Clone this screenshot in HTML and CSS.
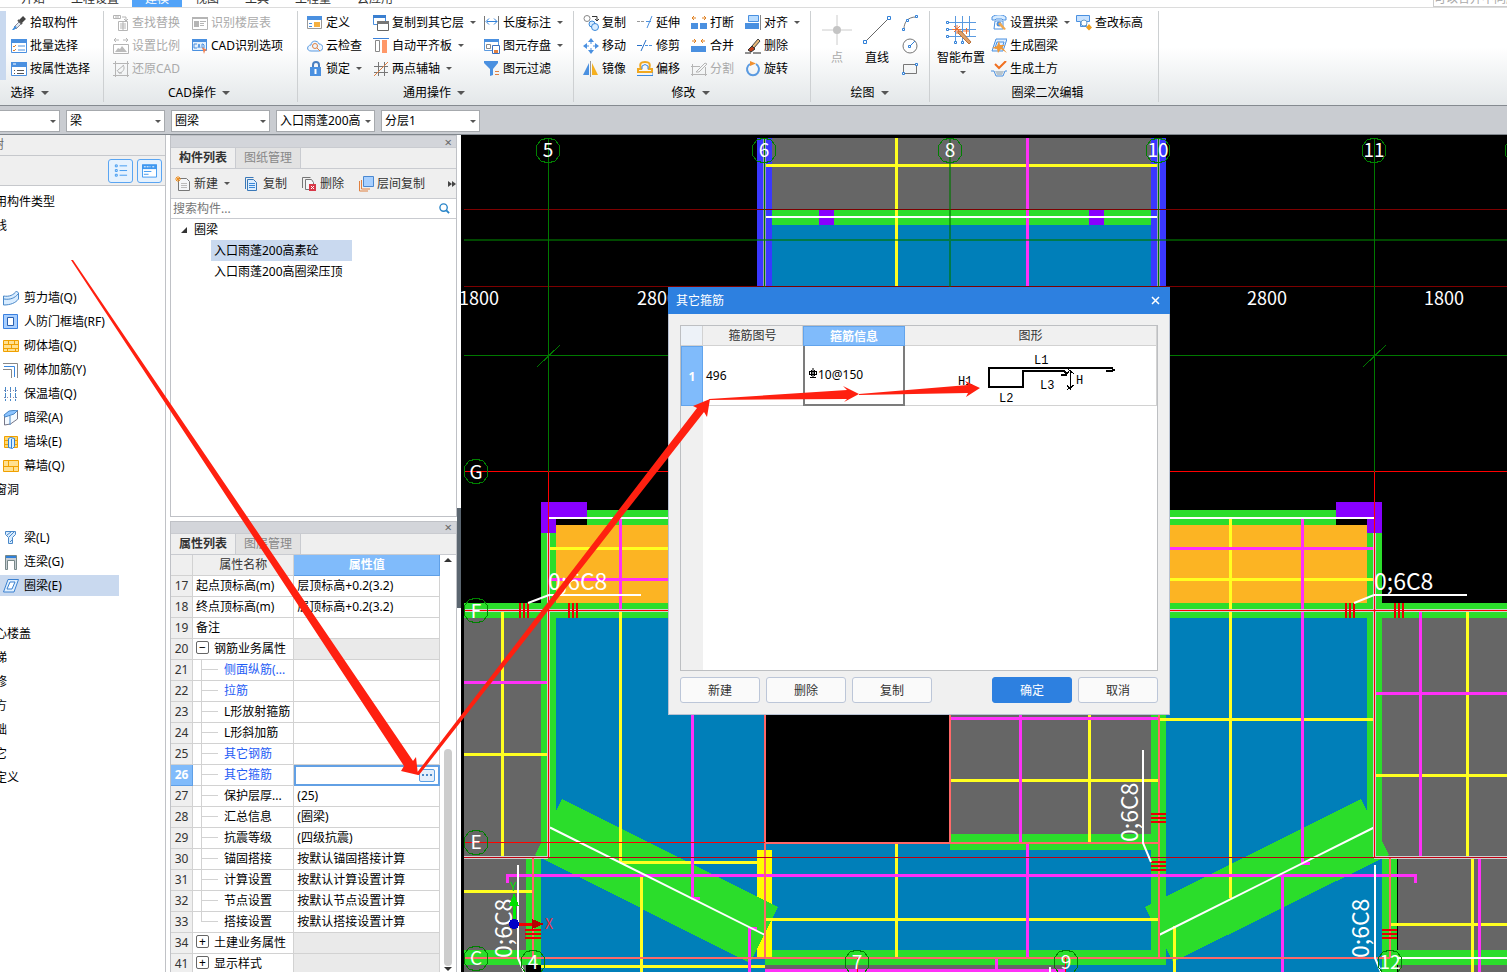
FILE: index.html
```html
<!DOCTYPE html>
<html lang="zh-CN">
<head>
<meta charset="utf-8">
<title>其它箍筋</title>
<link rel="stylesheet" href="styles.css">
</head>
<body>
<div class="app">
  <nav class="tabs">
    <a href="#" class="tab">开始</a><a href="#" class="tab">工程设置</a><a href="#" class="tab tab-on">建模</a><a href="#" class="tab">视图</a><a href="#" class="tab">工具</a><a href="#" class="tab">工程量</a><a href="#" class="tab">云应用</a>
    <span class="tip">可以合并不同版</span>
  </nav>

  <header class="ribbon">
    <section class="group g-select">
      <div class="tools">
        <button class="big-edge" aria-label="选择"></button>
        <div class="col">
          <button class="tool"><svg class="ico" viewBox="0 0 16 16"><path d="M3 12l6-6 2 2-6 6z" fill="#dfe9f2" stroke="#889"/><path d="M7 5l4 4" stroke="#555" stroke-width="2"/><path d="M9.500 6.500l4-4" stroke="#444" stroke-width="4"/><path d="M1 15l3-4 2 1-3 3z" fill="#3b8de0"/></svg>拾取构件</button>
          <button class="tool"><svg class="ico" viewBox="0 0 16 16"><path d="M.5 1.500h15v13H.5z" fill="#fff" stroke="#4a90e0"/><path d="M0 1h16v4H0z" fill="#4a90e0"/><path d="M7 8h7M7 12h7" stroke="#4a90e0"/><path d="M2 8l1 1 2-2M2 12l1 1 2-2" stroke="#e08030" fill="none"/></svg>批量选择</button>
          <button class="tool"><svg class="ico" viewBox="0 0 16 16"><path d="M.5 1.500h15v13H.5z" fill="#fff" stroke="#4a90e0"/><path d="M0 1h16v5H0z" fill="#4a90e0"/><path d="M2 3h3" stroke="#fff"/><path d="M6 9.500h7M6 12.500h7M3 9.500h1M3 12.500h1" stroke="#555"/></svg>按属性选择</button>
        </div>
      </div>
      <button class="group-name">选择<i class="caret big"></i></button>
    </section>

    <section class="group g-cad">
      <div class="tools">
        <div class="col">
          <button class="tool" disabled><svg class="ico" viewBox="0 0 16 16" fill="none" stroke="#b5b5b5"><path d="M.5.5h7v3h-7zM3 .5v3M5 .5v3M9 2h4v4M11 4l2 2 2-2M5.500 6.500h9v9h-9zM7 9h6M7 11h6M7 13h6M10 7v8"/></svg>查找替换</button>
          <button class="tool" disabled><svg class="ico" viewBox="0 0 16 16"><path d="M1 2h5M10 2h5M3 0L1 2l2 2M13 0l2 2-2 2M.5 6.500h15v9H.5z" fill="none" stroke="#b5b5b5"/><path d="M2 14l3-4 2 1 2-3 5 6z" fill="#bbb"/></svg>设置比例</button>
          <button class="tool" disabled><svg class="ico" viewBox="0 0 16 16" fill="none" stroke="#b5b5b5"><path d="M2.500 0v16M14.500 0v16M0 2.500h16M0 14.500h16M10 4c3 4-1 8-4 8M4 9l2 3 3 0M11 4L5 9"/></svg>还原CAD</button>
        </div>
        <div class="col">
          <button class="tool" disabled><svg class="ico" viewBox="0 0 16 16"><path d="M.5 2.500h15v12H.5z" fill="none" stroke="#b5b5b5"/><path d="M0 2h16v2H0zM2 6h5v6H2z" fill="#b5b5b5"/><path d="M8 6.500h6M8 8.500h4M8 10.500h4" stroke="#b5b5b5"/></svg>识别楼层表</button>
          <button class="tool"><svg class="ico" viewBox="0 0 16 16"><path d="M.5 1.500h14v11H.5z" fill="#e4f0fc" stroke="#4a90e0"/><path d="M0 1h15v3H0z" fill="#4a90e0"/><path d="M5 6H2v4h3M6 10l1-4 1 4M10 6v4h2V7l-1-1z" stroke="#4a90e0" fill="none"/><path d="M10 9l5 3-2 1-1 3z" fill="#f08050"/></svg>CAD识别选项</button>
        </div>
      </div>
      <button class="group-name">CAD操作<i class="caret big"></i></button>
    </section>

    <section class="group g-common">
      <div class="tools">
        <div class="col">
          <button class="tool"><svg class="ico" viewBox="0 0 16 16"><path d="M.5 1.500h14v12H.5z" fill="#fff" stroke="#999"/><path d="M0 1h15v4H0z" fill="#4a90e0"/><path d="M2 8.500h3M2 11.500h3" stroke="#4a90e0"/><path d="M7 7h6v5H7z" fill="#f5b040"/></svg>定义</button>
          <button class="tool"><svg class="ico" viewBox="0 0 16 16" fill="none"><path d="M4 13C-1 13 0 7 4 7c0-5 7-5 8-1 5 0 5 7 0 7z" fill="#eef6ff" stroke="#5a9ae0"/><circle cx="8" cy="8" r="2.500" stroke="#e08040"/><path d="M10 10l3 3" stroke="#e08040"/></svg>云检查</button>
          <button class="tool"><svg class="ico" viewBox="0 0 16 16"><path d="M6 7V4c0-4 6-4 6 0v3" fill="none" stroke="#4a7fc0" stroke-width="2"/><path d="M3 6h11v9H3z" fill="#4a90e0"/><path d="M8.500 8v5" stroke="#fff" stroke-width="2"/></svg>锁定<i class="caret"></i></button>
        </div>
        <div class="col">
          <button class="tool"><svg class="ico" viewBox="0 0 16 16"><path d="M.5.5h12v9H.5z" fill="#fff" stroke="#4a90e0"/><path d="M0 0h13v3H0z" fill="#3a7fd0"/><path d="M4.500 6.500h11v9h-11z" fill="#fff" stroke="#666"/><path d="M4 6h12v3H4z" fill="#777"/></svg>复制到其它层<i class="caret"></i></button>
          <button class="tool"><svg class="ico" viewBox="0 0 16 16"><path d="M0 .5h16" stroke="#3a80d8"/><path d="M2.500 2.500h4v11h-4z" fill="#fff" stroke="#888"/><path d="M9 2h5v13H9z" fill="#ff9868"/></svg>自动平齐板<i class="caret"></i></button>
          <button class="tool"><svg class="ico" viewBox="0 0 16 16" fill="none"><path d="M5.500 1v14M11.500 1v14M1 5.500h14M1 11.500h14" stroke="#777"/><path d="M1 15L15 1" stroke="#e08040"/></svg>两点辅轴<i class="caret"></i></button>
        </div>
        <div class="col">
          <button class="tool"><svg class="ico" viewBox="0 0 16 16" fill="none"><path d="M.5 1v14M14.500 1v14" stroke="#777"/><path d="M3 6.500h10M5 3.500l-3 3 3 3M10 3.500l3 3-3 3" stroke="#3080d8"/></svg>长度标注<i class="caret"></i></button>
          <button class="tool"><svg class="ico" viewBox="0 0 16 16"><path d="M.5 1.500h14v11H.5z" fill="#fff" stroke="#5a9ae0"/><path d="M0 1h15v3H0z" fill="#4a90e0"/><path d="M2.500 6.500h4v4h-4z" fill="none" stroke="#888"/><path d="M8.500 7.500h7v8h-7z" fill="#fff" stroke="#3a70c0"/><path d="M10 12h4v3h-4z" fill="#e08040"/></svg>图元存盘<i class="caret"></i></button>
          <button class="tool"><svg class="ico" viewBox="0 0 16 16"><path d="M0 0h14v2L9 8v6l-3 1V8L0 2z" fill="#4a90e0"/><path d="M11 10.500h4M11 13.500h4" stroke="#e08040"/></svg>图元过滤</button>
        </div>
      </div>
      <button class="group-name">通用操作<i class="caret big"></i></button>
    </section>

    <section class="group g-modify">
      <div class="tools">
        <div class="col">
          <button class="tool"><svg class="ico" viewBox="0 0 16 16" fill="none"><circle cx="4" cy="3.500" r="3" stroke="#888"/><path d="M9 1.500h5V6M12 4l2 2 2-2" stroke="#333"/><circle cx="9" cy="9" r="3" fill="#d8ecff" stroke="#3a88d8"/><circle cx="12" cy="12" r="3.500" fill="#d8ecff" stroke="#3a88d8"/></svg>复制</button>
          <button class="tool"><svg class="ico" viewBox="0 0 16 16"><path d="M8 0l3 4H5zM8 16l3-4H5zM0 8l4-3v6zM16 8l-4-3v6z" fill="#4a90e0"/><path d="M8 3v3M8 10v3M3 8h3M10 8h3" stroke="#4a90e0"/></svg>移动</button>
          <button class="tool"><svg class="ico" viewBox="0 0 16 16"><path d="M6 2v12H0z" fill="#4a90e0"/><path d="M7.500 0v16" stroke="#999"/><path d="M9 2v12h6z" fill="#f5b020"/></svg>镜像</button>
        </div>
        <div class="col">
          <button class="tool"><svg class="ico" viewBox="0 0 16 16" fill="none"><path d="M0 6.500h8" stroke="#999" stroke-dasharray="3 1"/><path d="M9 6.500h5M15 1l-5 12" stroke="#4a90e0"/></svg>延伸</button>
          <button class="tool"><svg class="ico" viewBox="0 0 16 16" fill="none"><path d="M0 7.500h5M9 2L4 13" stroke="#2870c8"/><path d="M8 7.500h8" stroke="#4a90e0" stroke-dasharray="3 1"/></svg>修剪</button>
          <button class="tool"><svg class="ico" viewBox="0 0 16 16" fill="none"><path d="M1 11V8h3C2 2 4 1 8 1s6 1 4 7h3v3z" stroke="#f0a820" stroke-width="2"/><path d="M0 14.500h16V11M5 8V5q3-3 6 0v3" stroke="#3a88e0"/></svg>偏移</button>
        </div>
        <div class="col">
          <button class="tool"><svg class="ico" viewBox="0 0 16 16"><path d="M0 8h7v6H0zM9 8h7v6H9z" fill="#4a90e0"/><path d="M1 3h4M11 3h4M3 1L1 3l2 2M13 1l2 2-2 2" fill="none" stroke="#e08020"/></svg>打断</button>
          <button class="tool"><svg class="ico" viewBox="0 0 16 16"><path d="M0 8h15v6H0z" fill="#4a90e0"/><path d="M1 3h4M10 3h4M3 1l2 2-2 2M12 1l-2 2 2 2" fill="none" stroke="#e08020"/></svg>合并</button>
          <button class="tool" disabled><svg class="ico" viewBox="0 0 16 16" fill="none" stroke="#b5b5b5"><path d="M1.500 3v12M0 5.500h9M0 13.500h16M14.500 6v9M5 11L14 2l2 1-8 8z"/></svg>分割</button>
        </div>
        <div class="col">
          <button class="tool"><svg class="ico" viewBox="0 0 16 16"><path d="M3.500.5h10v6h-10z" fill="#b8dcff" stroke="#4a90e0"/><path d="M0 8h14v6H0z" fill="#4a90e0"/><path d="M15.500 0v15" stroke="#888"/></svg>对齐<i class="caret"></i></button>
          <button class="tool"><svg class="ico" viewBox="0 0 16 16"><path d="M7 8l6-7 2 2-6 7z" fill="#e8b878" stroke="#444"/><path d="M3 12l4-4 3 3-4 3z" fill="#c04018" stroke="#333"/><path d="M0 15h6M8 15h8" stroke="#222"/></svg>删除</button>
          <button class="tool"><svg class="ico" viewBox="0 0 16 16" fill="none"><path d="M11 3a6 6 0 1 1-6 0" stroke="#5a9ae0" stroke-width="2"/><path d="M5 0l6 2.500L5 5z" fill="#f09030"/></svg>旋转</button>
        </div>
      </div>
      <button class="group-name">修改<i class="caret big"></i></button>
    </section>

    <section class="group g-draw">
      <div class="tools">
        <button class="big-tool" disabled><svg class="big-ico" viewBox="0 0 30 30"><path d="M15 0v30M0 15h30" stroke="#ccc"/><circle cx="15" cy="15" r="4" fill="#c4c4c4"/></svg>点</button>
        <button class="big-tool"><svg class="big-ico" viewBox="0 0 30 30" fill="#fff"><path d="M3 27L27 3" stroke="#666"/><path d="M1.500 25.500h3v3h-3zM25.500 1.500h3v3h-3z" stroke="#3080d8"/></svg>直线</button>
        <div class="col">
          <button class="tool" aria-label="弧"><svg class="ico" viewBox="0 0 16 16" fill="#fff"><path d="M2 14C2 7 6 2 14 2" fill="none" stroke="#777"/><path d="M.5 13.500h2v2h-2zM13.500.5h2v2h-2zM4.500 4.500h2v2h-2z" stroke="#3080d8"/></svg></button>
          <button class="tool" aria-label="圆"><svg class="ico" viewBox="0 0 16 16" fill="none"><circle cx="8" cy="8" r="7" stroke="#777"/><path d="M8 8l5-5M6.500 7.500h2v2h-2z" stroke="#3080d8"/></svg></button>
          <button class="tool" aria-label="矩形"><svg class="ico" viewBox="0 0 16 16" fill="#fff"><path d="M1.500 3.500h13v9h-13z" fill="none" stroke="#777"/><path d="M.5 11.500h2v2h-2zM13.500 2.500h2v2h-2z" stroke="#3080d8"/></svg></button>
        </div>
      </div>
      <button class="group-name">绘图<i class="caret big"></i></button>
    </section>

    <section class="group g-ring">
      <div class="tools">
        <button class="big-tool"><svg class="big-ico" viewBox="0 0 30 30" fill="none"><path d="M9.500 1v25M16.500 1v25M23.500 1v20M2 7.500h28M2 14.500h28M2 21.500h28" stroke="#5a9ae0"/><path d="M.5 6.500h2v2h-2zM.5 13.500h2v2h-2zM.5 20.500h2v2h-2zM8.500 26.500h2v2h-2zM15.500 26.500h2v2h-2z" fill="#fff" stroke="#3080d8"/><path d="M12 16l3 0 10 11-2 2-11-11z" fill="#e0a068" stroke="#b87038"/><path d="M11 10v9M6 14.500h9M8 11l6 6M14 11l-6 6M20.500 13v6M17 16h6" stroke="#f07030"/></svg>智能布置<i class="caret"></i></button>
        <div class="col">
          <button class="tool"><svg class="ico" viewBox="0 0 16 16"><path d="M1 5V2c4-3 10-3 14 0v3h-3l-1-1H5L4 5z" fill="#d8ecff" stroke="#4a90e0"/><path d="M4 6h8v8H3z" fill="#fff" stroke="#4a90e0"/><circle cx="8" cy="9" r="2.500" fill="#4a90e0"/><path d="M9 7l6 7-2 1-6-6z" fill="#f0a850"/></svg>设置拱梁<i class="caret"></i></button>
          <button class="tool"><svg class="ico" viewBox="0 0 16 16"><path d="M5 1h11l-4 12H1z" fill="#e0efff" stroke="#4a90e0"/><path d="M6 4h7l-2 6H4z" fill="none" stroke="#4a90e0"/><path d="M8 3l1 4 5 0-3 2 5 6-6-4-3 4-1-4-5-1 5-2z" fill="#f09838"/></svg>生成圈梁</button>
          <button class="tool"><svg class="ico" viewBox="0 0 16 16" fill="none"><path d="M4 3l4 4 7-7" stroke="#f07020" stroke-width="2"/><path d="M0 10h3l2 5h7l2-5h2" stroke="#4a90e0"/><path d="M4 10h9l-2 4H6z" fill="#b8c4cc"/></svg>生成土方</button>
        </div>
        <div class="col">
          <button class="tool"><svg class="ico" viewBox="0 0 16 16"><path d="M.5.5h13v6h-3v5h-6v-5h-4z" fill="#c8e2ff" stroke="#4a90e0"/><circle cx="8" cy="8" r="3" fill="#fff" stroke="#6a9cc8"/><path d="M13 9l3 3.500-3 3-3-3z" fill="#f0a020"/></svg>查改标高</button>
        </div>
      </div>
      <div class="group-name">圈梁二次编辑</div>
    </section>
  </header>

  <div class="picks">
    <label class="pick first"><select aria-label="楼层"><option></option></select></label>
    <label class="pick"><select aria-label="类别"><option>梁</option></select></label>
    <label class="pick"><select aria-label="构件类型"><option>圈梁</option></select></label>
    <label class="pick"><select aria-label="构件"><option>入口雨蓬200高素砼</option></select></label>
    <label class="pick"><select aria-label="分层"><option>分层1</option></select></label>
  </div>

  <main class="work">
    <aside class="nav">
      <div class="nav-title">导航树</div>
      <div class="nav-tools">
        <button class="view-btn" aria-label="列表"><svg viewBox="0 0 16 16" fill="none" stroke="#3d97f0"><path d="M2.500 1.500h2v2h-2zM2.500 6.500h2v2h-2zM2.500 11.500h2v2h-2zM7 2.500h8M7 7.500h8M7 12.500h8"/></svg></button>
        <button class="view-btn" aria-label="面板"><svg viewBox="0 0 16 16"><path d="M.5 1.500h15v13H.5z" fill="#fff" stroke="#3d97f0"/><path d="M0 1h16v5H0z" fill="#3d97f0"/><path d="M2 3.500h7M11 3.500h3" stroke="#fff" stroke-dasharray="2 1"/><path d="M2 8.500h8M2 11.500h5" stroke="#3d97f0"/></svg></button>
      </div>
      <ul class="tree">
        <li class="cat">常用构件类型</li>
        <li class="cat">轴线</li>
        <li></li>
        <li></li>
        <li><svg class="ico" viewBox="0 0 16 16"><path d="M.5 6c6 1 10-1 13-5l2 2v6c-3 4-8 6-15 6z" fill="#d8ecff" stroke="#4a88c8"/><path d="M1 9c6 1 11-1 14-5" fill="none" stroke="#4a88c8"/></svg>剪力墙(Q)</li>
        <li><svg class="ico" viewBox="0 0 16 16"><path d="M.5.5h14v14H.5z" fill="#a8cfff" stroke="#3a80e0"/><path d="M4.500 3.500h6v8h-6z" fill="#fff" stroke="#2a60b0"/></svg>人防门框墙(RF)</li>
        <li><svg class="ico" viewBox="0 0 16 16"><path d="M.5 2.500h15v11H.5zM0 6.500h16M0 10.500h16M5.500 2v4M11.500 2v4M8.500 6v4M4.500 10v4M12.500 10v4" fill="#ffe090" stroke="#f0a000"/></svg>砌体墙(Q)</li>
        <li><svg class="ico" viewBox="0 0 16 16" fill="none"><path d="M0 1.500h14.500V16M0 7.500h8.500V16" stroke="#888"/><path d="M1 4.500h10.500V15" stroke="#3a88e0"/></svg>砌体加筋(Y)</li>
        <li><svg class="ico" viewBox="0 0 16 16" fill="none"><path d="M2.500 1v14M7.500 1v14M12.500 1v14" stroke="#4a88c8" stroke-dasharray="5 1"/><path d="M1 4.500h14M1 11.500h14" stroke="#88a" stroke-dasharray="1 2"/></svg>保温墙(Q)</li>
        <li><svg class="ico" viewBox="0 0 16 16"><path d="M1.500 5.500l5-4 8-.5v8l-7 5-6 1z" fill="#f4faff" stroke="#778"/><path d="M1 5l5-4 9-1-4 4-9 3zM7 6v9" fill="#8cc4ff" stroke="#4a88c8"/></svg>暗梁(A)</li>
        <li><svg class="ico" viewBox="0 0 16 16"><path d="M1.500 2.500h13v11h-13zM1 6.500h14M1 10.500h14" fill="#ffd870" stroke="#f0a000"/><path d="M5.500 4.500l2-1 4 1v8l-2 2-4-1zM8.500 5v9" fill="#d8f0ff" stroke="#3080d8"/></svg>墙垛(E)</li>
        <li><svg class="ico" viewBox="0 0 16 16"><path d="M.5 2.500h15v11H.5zM0 8.500h16M5.500 2v6M10.500 8v6" fill="#ffe090" stroke="#f0a000"/></svg>幕墙(Q)</li>
        <li class="cat">门窗洞</li>
        <li></li>
        <li><svg class="ico" viewBox="0 0 16 16"><path d="M2.500 1.500h10v3l-3 3v6h-4v-6l-3-3z" fill="#d8ecff" stroke="#4a88c8"/><path d="M4 5l4-3M6 7l5-5M7 12l3-3" stroke="#4a88c8"/></svg>梁(L)</li>
        <li><svg class="ico" viewBox="0 0 16 16"><path d="M2.500 1.500h11v14h-2v-9h-7v9h-2z" fill="#c8cdd4" stroke="#788"/><path d="M3 3h10" stroke="#3080d8" stroke-width="2"/></svg>连梁(G)</li>
        <li class="picked"><svg class="ico" viewBox="0 0 16 16" fill="none" stroke="#3a80d0"><path d="M5 1.500h10.500L11 14H.5z" fill="#e0f0ff"/><path d="M7 4h5l-3 7H4z" fill="#fff"/></svg>圈梁(E)</li>
        <li></li>
        <li class="cat">空心楼盖</li>
        <li class="cat">楼梯</li>
        <li class="cat">装修</li>
        <li class="cat">土方</li>
        <li class="cat">基础</li>
        <li class="cat">其它</li>
        <li class="cat">自定义</li>
      </ul>
    </aside>

    <div class="docks">
      <section class="dock dock-list">
        <div class="dock-bar"><button aria-label="关闭">×</button></div>
        <div class="dock-tabs"><button class="dock-tab on">构件列表</button><button class="dock-tab">图纸管理</button></div>
        <div class="dock-tools">
          <button class="tool"><svg class="ico" viewBox="0 0 16 16"><path d="M3.500 2.500h8l3 3v9h-11z" fill="#f4f6f8" stroke="#777"/><path d="M6 7.500h6M6 9.500h6M6 11.500h6" stroke="#bbb"/><path d="M3 0v6M0 3h6M1 1l4 4M5 1L1 5" stroke="#f09020"/></svg>新建<i class="caret"></i></button>
          <button class="tool"><svg class="ico" viewBox="0 0 16 16"><path d="M1.500 13V1.500h8" fill="none" stroke="#3a78b8"/><path d="M3.500 3.500h6l3 3v8h-9z" fill="#dceeff" stroke="#3a78b8"/><path d="M5 7.500h6M5 9.500h6M5 11.500h6" stroke="#3a88d8"/></svg>复制</button>
          <button class="tool"><svg class="ico" viewBox="0 0 16 16"><path d="M1.500 12V1.500h8" fill="none" stroke="#777"/><path d="M4.500 3.500h6l2 3v7h-8z" fill="#f4f6f8" stroke="#777"/><path d="M8 8h7v7H8z" fill="#d83848"/><path d="M10 10l3 3M13 10l-3 3" stroke="#fff"/></svg>删除</button>
          <button class="tool"><svg class="ico" viewBox="0 0 16 16"><path d="M1.500 5v10H10M3.500 4v9H12" fill="none" stroke="#e08040"/><path d="M5.500.5h10v10h-10z" fill="#a8d0ff" stroke="#4a88d0"/></svg>层间复制</button>
          <button class="more" aria-label="更多"><i></i><i></i></button>
        </div>
        <label class="search"><input type="text" placeholder="搜索构件..." aria-label="搜索构件"><svg class="search-ico" viewBox="0 0 12 12" fill="none" stroke="#2884c8"><circle cx="5" cy="5" r="4" stroke-width="1.500"/><path d="M8 8l3 3" stroke-width="2"/></svg></label>
        <ul class="parts">
          <li class="parent">圈梁</li>
          <li><span class="part picked">入口雨蓬200高素砼</span></li>
          <li><span class="part">入口雨蓬200高圈梁压顶</span></li>
        </ul>
      </section>

      <section class="dock dock-props">
        <div class="dock-bar"><button aria-label="关闭">×</button></div>
        <div class="dock-tabs"><button class="dock-tab on">属性列表</button><button class="dock-tab">图层管理</button></div>
        <div class="props-wrap">
          <table class="props">
            <colgroup><col class="c-no"><col class="c-name"><col></colgroup>
            <thead><tr><th></th><th>属性名称</th><th class="hot">属性值</th></tr></thead>
            <tbody>
              <tr><th>17</th><td>起点顶标高(m)</td><td>层顶标高+0.2(3.2)</td></tr>
              <tr><th>18</th><td>终点顶标高(m)</td><td>层顶标高+0.2(3.2)</td></tr>
              <tr><th>19</th><td>备注</td><td></td></tr>
              <tr class="head"><th>20</th><td><button class="fold">−</button>钢筋业务属性</td><td></td></tr>
              <tr class="link"><th>21</th><td><i class="branch"></i>侧面纵筋(...</td><td></td></tr>
              <tr class="link"><th>22</th><td><i class="branch"></i>拉筋</td><td></td></tr>
              <tr><th>23</th><td><i class="branch"></i>L形放射箍筋</td><td></td></tr>
              <tr><th>24</th><td><i class="branch"></i>L形斜加筋</td><td></td></tr>
              <tr class="link"><th>25</th><td><i class="branch"></i>其它钢筋</td><td></td></tr>
              <tr class="link current"><th>26</th><td><i class="branch"></i>其它箍筋</td><td><button class="dots" aria-label="编辑其它箍筋"><i></i><i></i><i></i></button></td></tr>
              <tr><th>27</th><td><i class="branch"></i>保护层厚...</td><td>(25)</td></tr>
              <tr><th>28</th><td><i class="branch"></i>汇总信息</td><td>(圈梁)</td></tr>
              <tr><th>29</th><td><i class="branch"></i>抗震等级</td><td>(四级抗震)</td></tr>
              <tr><th>30</th><td><i class="branch"></i>锚固搭接</td><td>按默认锚固搭接计算</td></tr>
              <tr><th>31</th><td><i class="branch"></i>计算设置</td><td>按默认计算设置计算</td></tr>
              <tr><th>32</th><td><i class="branch"></i>节点设置</td><td>按默认节点设置计算</td></tr>
              <tr><th>33</th><td><i class="branch end"></i>搭接设置</td><td>按默认搭接设置计算</td></tr>
              <tr class="head"><th>34</th><td><button class="fold">+</button>土建业务属性</td><td></td></tr>
              <tr class="head"><th>41</th><td><button class="fold">+</button>显示样式</td><td></td></tr>
            </tbody>
          </table>
          <div class="scroll"><i class="up"></i><span></span><i class="thumb"></i><i class="down"></i></div>
        </div>
      </section>
    </div>

    <div class="splitter"><span></span></div>

    <div class="canvas">
      <svg class="plan">
        <g transform="translate(-461 -135)">
          <!-- upper block -->
          <path fill="#666" d="M765 138h393v71H765z"/>
          <path fill="#007fb9" d="M765 225h393v120H765z"/>
          <path fill="#2bdd2b" d="M765 209h393v16H765z"/>
          <path fill="#8800ff" d="M819 209h15v16h-15zM1089 209h15v16h-15z"/>
          <path fill="#3a38ff" d="M757 138h15v180h-15zM1151 138h15v180h-15z"/>
          <path stroke="#ffff20" stroke-width="3" d="M765 165.500h393M896 138v180"/>
          <path stroke="#ff30f8" stroke-width="3" d="M1027 138v180"/>
          <path stroke="#fff" stroke-width="2" d="M765 217h393"/>
          <path stroke="#9a9ab8" stroke-width="3" d="M764.500 138v180M1158.500 138v180"/>

          <!-- slabs -->
          <path fill="#666" d="M464 611h77v246h-77zM464 858h62v92h-62zM950 700h201v134H950zM1382 618h125v239h-125zM1398 858h109v114h-109zM765 965h300v7H765zM464 965h62v7h-62z"/>
          <path fill="#007fb9" d="M556 618h209v354H541V858h15zM765 843h386v107H765zM1166 618h201v240h15v114h-317v-7h101z"/>
          <path fill="#fcb423" d="M556 525h811v78H556z"/>

          <!-- beams -->
          <path fill="#2bdd2b" d="M587 510h749v15H587zM464 603h1043v15H464zM541 533h15v325h-15zM1367 533h15v325h-15zM526 858h15v107h-15zM464 950h77v15h-77zM765 950h401v15H765zM950 834h201v16H950zM1151 618h15v340h-15zM1382 858h15v114h-15zM1397 950h110v15h-110z"/>
          <path fill="#8800ff" d="M541 502h46v15h-31v16h-15zM1382 502h-46v15h31v16h15z"/>
          <path fill="#ffff00" d="M757 850h15v108h-15z"/>
          <path fill="#2bdd2b" d="M562 799l216 108-28 56-215-108zM1361 799l-216 108 28 55 216-107z"/>

          <!-- bar runs -->
          <g fill="none" stroke-width="3">
            <path stroke="#ffff20" d="M502.500 611v246M464 754.500h84M464 891.500h68M549 548.500h200M620.500 611v251M620 862.500h137M641.500 876v96M765 919h393M896 843v115M950 780h208M1089 700v142M1158 579.500h216M1230.500 518v380M1158 719h216M1174 926v46M1375 775h132M1467.500 611v246M1390 924.500h117M1472 858v114M541 966h224"/>
            <path stroke="#ff30f8" d="M464 682.500h84M549 579.500h200M620.500 518v93M692.500 618v280h7M749.500 972v-44h7M950 718.500h208M1020 700v142M1158 548.500h216M1302.500 518v345h7M1375 693h132M1420.500 611v246M1420 857.500h8M1479.500 858v114M1479 857.500h8M507.500 883v-7.500h908v7.500M1027 843v115M1282 972v-96M996 958v12M765 970.500h300"/>
          </g>
          <path stroke="#fff" stroke-width="2" shape-rendering="auto" d="M549 518h825M550 827.500l215 107.500M1159 935l215-107.500M1397 958h110"/>

          <!-- axes -->
          <path stroke="#cfcfcf" stroke-width="3" d="M548.500 533v325M464 857.500h84M1374.500 533v325M1374 857.500h133M464 610.500h1043"/>
          <path stroke="#ff6868" stroke-width="2" d="M765 714v243M765 842.500h393M1158.500 618v340M950 714v128M533 858v100M1390 858v100M464 958h926"/>
          <path stroke="#f00" d="M548.500 472v385M1374.500 472v385M464 610.500h1043M464 471.500h1043M464 842.500h301M1065.500 958v14M857.500 958v14"/>
          <path stroke="#c00010" d="M464 857.500h1043"/>
          <path stroke="#7c0000" d="M464 209.500h1043M464 286.500h1043"/>
          <path stroke="#007800" d="M464 355.500h1043M548.500 138v334M1374.500 138v334M764.500 138v149M1158.500 138v149M537 367l23-22M1363 367l23-22"/>
          <path stroke="#007800" stroke-width="2" opacity=".6" d="M464 240h1043M950 138v149"/>

          <!-- rebar hatches -->
          <path stroke="#e80000" stroke-width="2" d="M520 603v15M524 603v15M528 603v15M569 603v15M573 603v15M577 603v15M1346 603v15M1350 603v15M1354 603v15M1395 603v15M1399 603v15M1403 603v15M1151 814h15M1151 818h15M1151 822h15M1151 862h15M1151 866h15M1151 870h15M1382 930h15M1382 934h15M1382 938h15M525 930h16M525 934h16M525 938h16"/>

          <!-- leaders -->
          <path fill="none" stroke="#fff" stroke-width="2" shape-rendering="auto" d="M528 603l21-8h92M1354 603l20-8h93M1143 750v93l8 19M1375 865v93l6 14M518 865v93l6 14M1050 967v5"/>
          <g class="mark"><text x="548" y="590">0;6C8</text><text x="1374" y="590">0;6C8</text><text transform="translate(1138 842) rotate(-90)">0;6C8</text><text transform="translate(1369 958) rotate(-90)">0;6C8</text><text transform="translate(512 958) rotate(-90)">0;6C8</text></g>

          <!-- axis bubbles -->
          <g fill="none" stroke="#008000">
            <path id="bubble" d="M548 138l7 2 4 5 1 5-1 6-4 5-7 2-7-2-4-5-1-6 1-5 4-5z"/>
            <use href="#bubble" x="216"/><use href="#bubble" x="402"/><use href="#bubble" x="610"/><use href="#bubble" x="826"/><use href="#bubble" x="969"/>
            <use href="#bubble" x="-72" y="321"/><use href="#bubble" x="-72" y="460"/><use href="#bubble" x="-72" y="692"/><use href="#bubble" x="-72" y="808"/>
            <use href="#bubble" x="-15" y="812"/><use href="#bubble" x="309" y="812"/><use href="#bubble" x="518" y="812"/><use href="#bubble" x="842" y="812"/>
          </g>
          <g class="axis"><text x="548" y="157">5</text><text x="764" y="157">6</text><text x="950" y="157">8</text><text x="1158" y="157">10</text><text x="1374" y="157">11</text><text x="1517" y="157">13</text><text x="476" y="479">G</text><text x="476" y="618">F</text><text x="476" y="849">E</text><text x="476" y="965">C</text><text x="533" y="969">4</text><text x="857" y="969">7</text><text x="1066" y="969">9</text><text x="1390" y="969">12</text></g>
          <g class="size"><text x="459" y="305">1800</text><text x="637" y="305">2800</text><text x="1247" y="305">2800</text><text x="1424" y="305">1800</text></g>

          <!-- origin gizmo -->
          <path stroke="#00f000" stroke-width="3" d="M514 924v-22"/><path fill="#00e000" d="M514 893l5 13h-10z"/>
          <path stroke="#f00000" stroke-width="3" d="M514 924h22"/><path fill="#b80000" d="M544 924l-12 5v-10z"/>
          <circle cx="514" cy="924" r="5" fill="#0000c8"/>
          <text class="ax-x" x="545" y="929">X</text><text class="ax-y" x="510" y="891">Y</text>
        </g>
      </svg>

      <section class="dialog" role="dialog" aria-labelledby="dlg-title">
        <header class="dialog-title"><span id="dlg-title">其它箍筋</span><button aria-label="关闭"><svg viewBox="0 0 9 9" stroke="#fff" stroke-width="1.500"><path d="M1 1l7 7M8 1L1 8"/></svg></button></header>
        <div class="dialog-body">
          <div class="grid-frame">
            <table class="grid">
              <colgroup><col class="d-no"><col class="d-code"><col class="d-info"><col></colgroup>
              <thead><tr><th class="corner"></th><th>箍筋图号</th><th class="hot">箍筋信息</th><th>图形</th></tr></thead>
              <tbody><tr>
                <th class="hot">1</th><td>496</td>
                <td class="edit"><svg class="rebar" viewBox="0 0 10 11" fill="none" stroke="#000"><path d="M5 0v9M2 9.500h6M1 3.500h8M1 6.500h8M1.500 3v4M8.500 3v4M3.500 2v6M6.500 2v6"/></svg>10@150</td>
                <td class="shape"><svg class="stirrup"><g transform="translate(-905 -346)">
                  <path fill="none" stroke="#000" stroke-width="2" d="M1113 368H989v19h34v-16h42M1064 371l2 2v2h-5M1106 371h7M1112 370h3"/>
                  <path fill="none" stroke="#000" d="M1070.500 370v20M1067 374l3-4 4 4M1067 385l3 4 4-4M1068 369l6 5M1067 390l6-5"/>
                  <text x="1034" y="364">L1</text><text x="999" y="402">L2</text><text x="1040" y="389">L3</text><text x="1076" y="384">H</text><text x="958" y="385">H1</text>
                </g></svg></td>
              </tr></tbody>
            </table>
          </div>
          <footer class="dialog-foot"><button>新建</button><button>删除</button><button>复制</button><button class="ok">确定</button><button>取消</button></footer>
        </div>
      </section>
    </div>
  </main>

  <svg class="arrows" aria-hidden="true"><path fill="#ff2010" d="M71 260h2L413 761l3-4 2 18-17-4 3-5zM416 774L697 408l-4-2 17-7-3 18-3-5L419 775zM709 399l138-9-4-4 16 8-15 8 3-3-138 1zM859 394l109-9-3-4 15 7-14 9 2-4-109 2z"/></svg>
</div>
</body>
</html>
```

FILE: styles.css
```css
* { box-sizing: border-box; }
body { margin: 0; }
body, button, input, select {
  font-family: "Noto Sans", "Noto Sans CJK SC", sans-serif;
  font-size: 12px;
  line-height: 16px;
  color: #000;
}
button { border: 0; padding: 0; background: none; white-space: nowrap; }
ul { list-style: none; margin: 0; padding: 0; }
svg { display: block; flex: none; }

.app { position: relative; height: 100vh; display: flex; flex-direction: column; overflow: hidden; background: #fff; }

/* tabs */
.tabs { flex: none; display: flex; align-items: flex-end; height: 8px; padding-left: 8px; overflow: hidden; border-bottom: 1px solid #dcdcdc; }
.tab { flex: none; padding: 0 13px 1px; line-height: 14px; color: #333; text-decoration: none; }
.tab-on { background: #52a3f8; color: #fff; }
.tip { margin-left: auto; width: 74px; border: 1px solid #ccc; border-right: 0; line-height: 14px; color: #aaa; white-space: nowrap; overflow: hidden; }

/* ribbon */
.ribbon { flex: none; display: flex; height: 98px; background: linear-gradient(#fff 40%, #e3e7e9); border-bottom: 1px solid #858a90; }
.group { flex: none; display: flex; flex-direction: column; margin: 3px 0; border-right: 1px solid #cdd0d2; }
.g-select { width: 104px; }
.g-cad { width: 194px; padding-left: 9px; }
.g-common { width: 276px; padding-left: 9px; }
.g-modify { width: 237px; padding-left: 9px; }
.g-draw { width: 119px; padding-left: 11px; }
.g-ring { width: 229px; padding-left: 7px; }
.tools { display: flex; height: 69px; }
.g-select .tools { gap: 5px; }
.g-cad .tools { gap: 12px; }
.g-common .tools { display: grid; grid-template-columns: 66px 111px auto; }
.g-modify .tools { gap: 11px; }
.g-draw .tools { gap: 10px; }
.g-ring .tools { gap: 6px; }
.big-edge { width: 6px; background: #c9d9ef; }
.col { display: flex; flex-direction: column; }
.tool { display: flex; align-items: center; gap: 3px; height: 23px; }
.tool:disabled, .big-tool:disabled { color: #aaa; }
.ico { width: 16px; height: 16px; }
.caret { display: inline-block; margin-left: 3px; border: 3px solid transparent; border-top-color: #555; border-bottom: 0; }
.caret.big { border-width: 4px 4px 0; margin-left: 6px; vertical-align: 2px; }
.group-name { height: 26px; line-height: 26px; text-align: center; }
.g-select .group-name { padding-right: 44px; }
.g-cad .group-name, .g-common .group-name, .g-modify .group-name, .g-draw .group-name { padding-right: 12px; }
.big-tool { display: flex; flex-direction: column; align-items: center; gap: 5px; padding-top: 4px; }
.big-ico { width: 30px; height: 30px; }

/* pickers */
.picks { flex: none; display: flex; gap: 6px; height: 29px; padding: 4px 0 3px; background: #c9ccd1; border-bottom: 1px solid #80868c; }
.pick { position: relative; width: 99px; height: 22px; }
.pick.first { width: 60px; }
.pick select { width: 100%; height: 100%; padding: 0 14px 0 3px; appearance: none; background: #fff; border: 1px solid #a6a9ad; border-radius: 0; }
.pick.first select { border-left: 0; }
.pick::after { content: ""; position: absolute; right: 4px; top: 10px; border: 3px solid transparent; border-top-color: #555; border-bottom: 0; }

.work { flex: 1; display: flex; min-height: 0; }

/* navigation tree */
.nav { flex: none; width: 166px; border-right: 1px solid #c0c2c6; overflow: hidden; }
.nav-title { height: 21px; background: #efefef; border-bottom: 1px solid #c6c8cc; color: #666; line-height: 20px; text-indent: -32px; }
.nav-tools { display: flex; justify-content: flex-end; align-items: center; gap: 4px; height: 30px; padding-right: 3px; background: #efefef; border-bottom: 1px solid #c6c8cc; }
.view-btn { width: 25px; height: 24px; padding: 3px 4px; border: 1px solid #5aa5f2; border-radius: 3px; background: #e6f2fe; }
.view-btn svg { width: 15px; height: 16px; }
.tree { padding-top: 4px; }
.tree li { display: flex; align-items: center; gap: 5px; height: 24px; padding-left: 3px; white-space: nowrap; }
.tree .cat { margin-left: -20px; }
.tree .picked { width: 119px; background: linear-gradient(transparent 1px, #c9d9ef 1px, #c9d9ef 22px, transparent 22px); }

/* docks */
.docks { flex: none; display: flex; flex-direction: column; gap: 4px; width: 291px; padding-left: 4px; }
.dock { display: flex; flex-direction: column; border: 1px solid #bfc1c6; }
.dock-list { flex: 381 1 0; }
.dock-props { flex: 452 1 0; min-height: 0; border-bottom: 0; }
.dock-bar { flex: none; display: flex; justify-content: flex-end; height: 11px; padding-right: 4px; background: #d3d5da; }
.dock-bar button { font-size: 13px; line-height: 10px; color: #666; }
.dock-tabs { flex: none; display: flex; height: 22px; background: #efefef; border-bottom: 1px solid #c9cbd0; border-top: 1px solid #c9cbd0; }
.dock-tab { width: 65px; background: #e2e2e2; border-right: 1px solid #c9cbd0; color: #888; }
.dock-tab.on { background: #efefef; font-weight: bold; color: #333; }
.dock-tools { flex: none; display: flex; align-items: center; gap: 14px; height: 30px; padding-left: 4px; background: #efefef; border-bottom: 1px solid #c9cbd0; }
.dock-tools .tool { color: #333; }
.more { display: flex; margin-left: auto; }
.more i { border: 3px solid transparent; border-left: 4px solid #444; border-right: 0; }
.search { flex: none; display: flex; align-items: center; height: 20px; padding: 0 6px 0 2px; border-bottom: 1px solid #c9cbd0; }
.search input { flex: 1; min-width: 0; padding: 0; border: 0; outline: 0; }
.search input::placeholder { color: #777; }
.search-ico { width: 11px; height: 11px; }
.parts li { display: flex; align-items: center; height: 21px; padding-left: 40px; }
.parts .parent { gap: 7px; padding-left: 10px; }
.parent::before { content: ""; border: 0 solid transparent; border-width: 0 0 6px 6px; border-bottom-color: #333; }
.part { width: 141px; height: 21px; line-height: 21px; padding-left: 3px; white-space: nowrap; }
.part.picked { background: #c9d9ef; }

/* property table */
.props-wrap { flex: 1; display: flex; min-height: 0; overflow: hidden; }
.props { flex: 1; align-self: flex-start; table-layout: fixed; border-collapse: separate; border-spacing: 0; }
.c-no { width: 22px; }
.c-name { width: 101px; }
.props th, .props td { height: 21px; padding: 0 3px; line-height: 20px; text-align: left; border-right: 1px solid #d2d2d2; border-bottom: 1px solid #d2d2d2; white-space: nowrap; overflow: hidden; }
.props th { padding: 0; text-align: center; font-weight: normal; background: #efefef; color: #333; }
.props .hot, .props .current th { background: #80bbfb; border-color: #5f9fe6; color: #fff; font-weight: bold; }
.props .head td:last-child { background: #eaeaea; }
.props .link td { color: #1f5cf5; }
.props .current td:last-child { border: 2px solid #62a0e4; line-height: 16px; }
.fold { width: 13px; height: 13px; margin-right: 5px; border: 1px solid #666; border-radius: 2px; background: #fff; line-height: 10px; vertical-align: 1px; }
.branch { display: inline-block; width: 17px; height: 20px; margin: 0 6px 0 5px; vertical-align: top; background: linear-gradient(#d2d2d2, #d2d2d2) 0 0 / 1px 21px no-repeat, linear-gradient(#d2d2d2, #d2d2d2) 0 9px / 17px 1px no-repeat; }
.branch.end { background-size: 1px 10px, 17px 1px; }
.dots { display: flex; align-items: center; justify-content: center; gap: 2px; width: 16px; height: 13px; margin-left: auto; border: 1px solid #5a9fe4; border-radius: 2px; background: #e4effb; }
.dots i { width: 2px; height: 2px; background: #4a88c8; }
.scroll { flex: none; display: grid; grid-template-rows: 10px 184fr 217fr 6px; justify-items: center; width: 16px; }
.up, .down { align-self: center; border: 4px solid transparent; }
.up { border-top: 0; border-bottom-color: #333; }
.down { border-bottom: 0; border-top-color: #333; }
.thumb { width: 8px; border-radius: 4px; background: #cdcdcd; }

.splitter { flex: none; display: flex; align-items: center; width: 4px; padding-top: 8px; }
.splitter span { width: 4px; height: 100px; background: #5b6670; }

/* drawing canvas */
.canvas { position: relative; flex: 1; min-width: 0; background: #000; overflow: hidden; }
.plan { width: 100%; height: 100%; shape-rendering: crispEdges; }
.plan text { fill: #fff; font-family: "Noto Sans CJK SC", sans-serif; }
.mark text { font-size: 23px; }
.axis text { font-size: 19px; text-anchor: middle; }
.size text { font-size: 18px; }
.plan .ax-x { fill: #f03040; font-size: 14px; }
.plan .ax-y { fill: #00e000; font-size: 12px; }

/* dialog window */
.dialog { position: absolute; left: 207px; top: 152px; width: 502px; height: 428px; display: flex; flex-direction: column; background: #f0f0f0; border: 1px solid #b9c2d2; border-top: 0; }
.dialog-title { display: flex; align-items: center; justify-content: space-between; height: 27px; margin: 0 -1px; padding: 0 10px 0 8px; background: #2d80e0; color: #fff; }
.dialog-title svg { width: 9px; height: 9px; }
.dialog-body { flex: 1; display: flex; flex-direction: column; gap: 6px; padding: 11px; }
.grid-frame { flex: 1; border: 1px solid #bdbfc2; background: linear-gradient(to right, #f0f0f0 22px, #fff 22px); }
.grid { width: 100%; table-layout: fixed; border-collapse: separate; border-spacing: 0; }
.d-no { width: 22px; }
.d-code { width: 100px; }
.d-info { width: 102px; }
.grid th { height: 20px; padding: 1px 0 0; font-weight: normal; color: #333; background: #f0f0f0; border-right: 1px solid #d2d2d2; border-bottom: 1px solid #d2d2d2; }
.grid .corner { background: #edf2f8; }
.grid .hot { background: #80bbfb; border: 1px solid #62a4ec; color: #fff; font-weight: bold; }
.grid td { height: 60px; padding: 0 3px; border-bottom: 1px solid #d2d2d2; }
.grid .edit { border: 2px solid #7c7c7c; border-top: 0; }
.grid .shape { padding: 0; border-right: 1px solid #d2d2d2; }
.rebar { display: inline-block; width: 10px; height: 11px; vertical-align: 0; }
.stirrup { width: 100%; height: 59px; shape-rendering: crispEdges; }
.stirrup text { font: 12px "Liberation Mono", monospace; }
.dialog-foot { display: flex; gap: 6px; }
.dialog-foot button { width: 80px; height: 26px; padding-top: 2px; border: 1px solid #bcc6d8; border-radius: 3px; background: #fafafa; color: #333; }
.dialog-foot .ok { margin-left: auto; background: #2d80e0; border-color: #2d80e0; color: #fff; }

/* callout arrows laid over the window */
.arrows { position: absolute; left: 0; top: 0; width: 100%; height: 100%; pointer-events: none; }
```
